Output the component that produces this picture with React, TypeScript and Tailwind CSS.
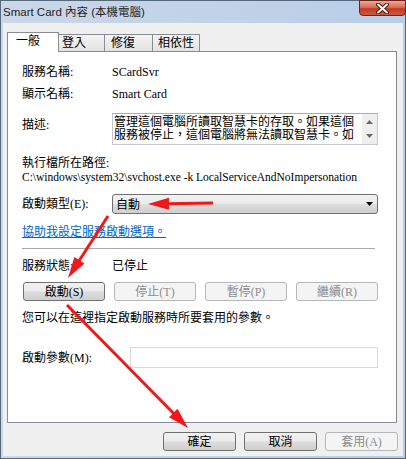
import type { ReactNode } from 'react';
import clsx from 'clsx';

type Pt = { x: number; y: number };

function Arrow({ from, to }: { from: Pt; to: Pt }) {
  const dx = to.x - from.x;
  const dy = to.y - from.y;
  const len = Math.hypot(dx, dy);
  const ux = dx / len;
  const uy = dy / len;
  const L = 21;
  const W = 6;
  const bx = to.x - ux * L;
  const by = to.y - uy * L;
  const pts = `${to.x},${to.y} ${bx - uy * W},${by + ux * W} ${bx + uy * W},${by - ux * W}`;
  return (
    <g>
      <line x1={from.x} y1={from.y} x2={bx + ux * 2} y2={by + uy * 2} stroke="#f01818" strokeWidth={3} />
      <polygon points={pts} fill="#f01818" />
    </g>
  );
}

function Btn({ children, disabled, className }: { children: ReactNode; disabled?: boolean; className?: string }) {
  return (
    <button
      type="button"
      className={clsx(
        'h-[19px] flex items-center justify-center rounded-[3px] border text-[12px] leading-none',
        disabled
          ? 'border-[#b5b7ba] bg-[#f4f4f4] text-[#8c8c8c]'
          : 'border-[#707070] bg-[linear-gradient(#f2f2f2_0%,#ebebeb_48%,#dddddd_52%,#cfcfcf_100%)] text-black',
        className,
      )}
    >
      {children}
    </button>
  );
}

function CloseButton() {
  return (
    <div className="-mt-[1px] -mr-[3px] w-[47px] h-[16px] rounded-b-[4px] border border-[#6b2418] bg-[linear-gradient(#eaa898_0%,#d86d57_45%,#c43b22_55%,#cd5840_100%)] flex items-center justify-center">
      <svg width="13" height="11" viewBox="0 0 13 11">
        <path d="M2 1.5 L11 9.5 M11 1.5 L2 9.5" stroke="#4a1a12" strokeWidth="4" strokeLinecap="round" />
        <path d="M2 1.5 L11 9.5 M11 1.5 L2 9.5" stroke="#ffffff" strokeWidth="2" strokeLinecap="round" />
      </svg>
    </div>
  );
}

function Tabs() {
  return (
    <div className="flex items-end h-[19px] font-['Noto_Sans_CJK_TC',sans-serif] text-[12px]">
      <div className="relative z-10 -mb-px h-[20px] w-[52px] border-l border-t border-r border-[#898c95] bg-white pl-[8px] leading-[14px]">
        一般
      </div>
      <div className="h-[17px] w-[46px] border-t border-r border-[#898c95] bg-[linear-gradient(#f4f4f4,#e3e3e3)] pl-[3px] leading-[14px]">
        登入
      </div>
      <div className="h-[17px] w-[48px] border-t border-r border-[#898c95] bg-[linear-gradient(#f4f4f4,#e3e3e3)] pl-[6px] leading-[14px]">
        修復
      </div>
      <div className="h-[17px] w-[47px] border-t border-r border-[#898c95] bg-[linear-gradient(#f4f4f4,#e3e3e3)] pl-[5px] leading-[14px]">
        相依性
      </div>
    </div>
  );
}

export default function App() {
  return (
    <div className="relative w-[406px] h-[459px] border border-[#56687c] bg-[linear-gradient(90deg,#cad8e8,#b8cee7)] flex flex-col px-[2px] pb-[2px] font-['Liberation_Serif','Noto_Sans_CJK_TC',serif] text-[12px] text-black">
      <div className="h-[22px] flex items-start justify-between">
        <span className="mt-[3px] font-['Liberation_Sans','Noto_Sans_CJK_TC',sans-serif] text-[11.5px] leading-[16px] text-[#1e1e1e]">
          Smart Card 內容 (本機電腦)
        </span>
        <CloseButton />
      </div>

      <div className="flex-1 bg-[#f0f0f0] flex flex-col pt-[9px] pl-[4px] pr-[5px]">
        <Tabs />

        <div className="w-[390px] h-[372px] border border-[#898c95] bg-white pl-[14px] flex flex-col">
          <div className="mt-[12px] flex leading-[16px]">
            <span className="w-[90px]">服務名稱:</span>
            <span>SCardSvr</span>
          </div>
          <div className="mt-[6px] flex leading-[16px]">
            <span className="w-[90px]">顯示名稱:</span>
            <span>Smart Card</span>
          </div>
          <div className="mt-[11px] flex items-start">
            <span className="w-[90px] mt-[4px] leading-[16px]">描述:</span>
            <div className="w-[266px] h-[32px] border border-[#c3c6cb] border-t-[#a9acb1] flex">
              <div className="flex-1 pl-[1px] leading-[13px] font-['Noto_Sans_CJK_TC',sans-serif] whitespace-nowrap">
                <div>管理這個電腦所讀取智慧卡的存取。如果這個</div>
                <div>服務被停止，這個電腦將無法讀取智慧卡。如</div>
              </div>
              <div className="w-[15px] bg-[#efefef] flex flex-col items-center justify-between py-[6px]">
                <svg width="7" height="4" viewBox="0 0 7 4">
                  <path d="M0 4 L3.5 0 L7 4 Z" fill="#6a6a6a" />
                </svg>
                <svg width="7" height="4" viewBox="0 0 7 4">
                  <path d="M0 0 L7 0 L3.5 4 Z" fill="#6a6a6a" />
                </svg>
              </div>
            </div>
          </div>
          <div className="mt-[11px] leading-[14px]">執行檔所在路徑:</div>
          <div className="leading-[14px] whitespace-nowrap text-[11.5px]">C:\windows\system32\svchost.exe -k LocalServiceAndNoImpersonation</div>

          <div className="mt-[10px] flex items-center">
            <span className="w-[90px] leading-[16px]">啟動類型(E):</span>
            <div className="w-[266px] h-[20px] rounded-[3px] border border-[#707070] bg-[linear-gradient(#f2f2f2_0%,#ebebeb_48%,#dddddd_52%,#cfcfcf_100%)] flex items-center justify-between pl-[3px] pr-[4px]">
              <span className="leading-[16px] font-['Noto_Sans_CJK_TC',sans-serif]">自動</span>
              <svg width="7" height="4" viewBox="0 0 7 4">
                <path d="M0 0 L7 0 L3.5 4 Z" fill="#000" />
              </svg>
            </div>
          </div>

          <div className="mt-[10px] leading-[16px]">
            <span className="text-[#0066cc] underline">協助我設定服務啟動選項。</span>
          </div>

          <div className="mt-[8px] w-[353px] h-px bg-[#a8a8a8]" />

          <div className="mt-[9px] flex leading-[16px]">
            <span className="w-[90px]">服務狀態:</span>
            <span>已停止</span>
          </div>

          <div className="mt-[8px] w-[356px] pl-[1px] flex justify-between">
            <Btn className="w-[82px]">啟動(S)</Btn>
            <Btn className="w-[82px]" disabled>停止(T)</Btn>
            <Btn className="w-[82px]" disabled>暫停(P)</Btn>
            <Btn className="w-[82px]" disabled>繼續(R)</Btn>
          </div>

          <div className="mt-[9px] leading-[16px]">您可以在這裡指定啟動服務時所要套用的參數。</div>

          <div className="mt-[21px] flex items-center">
            <span className="w-[108px] leading-[16px]">啟動參數(M):</span>
            <div className="w-[248px] h-[21px] border border-[#d9d9d9] bg-white" />
          </div>
        </div>

        <div className="mt-[9px] flex justify-end gap-[8px]">
          <Btn className="w-[73px]">確定</Btn>
          <Btn className="w-[73px]">取消</Btn>
          <Btn className="w-[73px]" disabled>套用(A)</Btn>
        </div>
      </div>

      <svg className="absolute -left-px -top-px w-[406px] h-[459px] pointer-events-none" viewBox="0 0 406 459">
        <Arrow from={{ x: 213, y: 203 }} to={{ x: 148, y: 204 }} />
        <Arrow from={{ x: 108, y: 216 }} to={{ x: 68, y: 278 }} />
        <Arrow from={{ x: 67, y: 305 }} to={{ x: 188, y: 428 }} />
      </svg>
    </div>
  );
}
